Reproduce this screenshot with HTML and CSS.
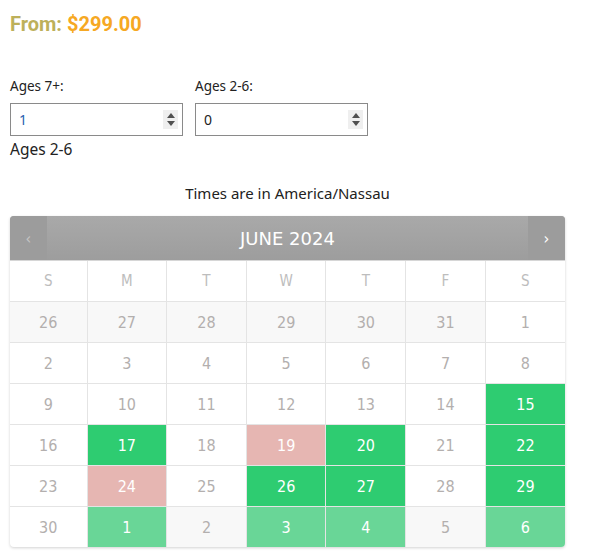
FILE: index.html
```html
<!DOCTYPE html>
<html lang="en">
  <head>
    <meta charset="UTF-8">
    <title>Booking</title>
    <link rel="stylesheet" href="styles.css">
  </head>
  <body>
    <div id="booking">
      <h2 class="price"><span class="price_from">From:</span> <span class="price_value">$299.00</span></h2>

      <div class="qty_row">
        <div class="qty">
          <label class="qty_label">Ages 7+:</label>
          <div class="qty_box">
            <input type="text" class="qty_input qty_input_blue" value="1">
            <span class="spin"><i class="spin_up"></i><i class="spin_down"></i></span>
          </div>
        </div>
        <div class="qty">
          <label class="qty_label">Ages 2-6:</label>
          <div class="qty_box">
            <input type="text" class="qty_input" value="0">
            <span class="spin"><i class="spin_up"></i><i class="spin_down"></i></span>
          </div>
        </div>
      </div>
      <div class="qty_note">Ages 2-6</div>

      <div class="tz">Times are in America/Nassau</div>

      <div class="cal">
        <div class="cal_head">
          <div class="cal_nav cal_prev">&lsaquo;</div>
          <div class="cal_title">JUNE 2024</div>
          <div class="cal_nav cal_next">&rsaquo;</div>
        </div>
        <table class="cal_grid">
          <colgroup>
            <col class="col_first"><col><col><col><col><col><col>
          </colgroup>
          <tr class="cal_days">
            <th>S</th><th>M</th><th>T</th><th>W</th><th>T</th><th>F</th><th>S</th>
          </tr>
          <tr>
            <td class="old">26</td><td class="old">27</td><td class="old">28</td><td class="old">29</td><td class="old">30</td><td class="old">31</td><td>1</td>
          </tr>
          <tr>
            <td>2</td><td>3</td><td>4</td><td>5</td><td>6</td><td>7</td><td>8</td>
          </tr>
          <tr>
            <td>9</td><td>10</td><td>11</td><td>12</td><td>13</td><td>14</td><td class="open">15</td>
          </tr>
          <tr>
            <td>16</td><td class="open">17</td><td>18</td><td class="full">19</td><td class="open">20</td><td>21</td><td class="open">22</td>
          </tr>
          <tr>
            <td>23</td><td class="full">24</td><td>25</td><td class="open">26</td><td class="open">27</td><td>28</td><td class="open">29</td>
          </tr>
          <tr>
            <td>30</td><td class="open_next">1</td><td class="old">2</td><td class="open_next">3</td><td class="open_next">4</td><td class="old">5</td><td class="open_next">6</td>
          </tr>
        </table>
      </div>
    </div>
  </body>
</html>
```

FILE: styles.css
```css
body {
  margin: 0;
  padding: 10px;
  background: #fff;
  font-family: "Noto Sans", sans-serif;
  color: #222;
}
#booking {
  width: 555px;
}
.price {
  margin: 2px 0 0 0;
  font-family: Roboto, sans-serif;
  font-size: 20px;
  font-weight: 700;
  line-height: 24px;
}
.price_from {
  color: #bdb05a;
}
.price_value {
  color: #f6a823;
}

.qty_row {
  display: flex;
  gap: 12px;
  margin-top: 41px;
}
.qty_label {
  display: block;
  font-size: 13.5px;
  line-height: 19px;
  margin-bottom: 7px;
}
.qty_box {
  width: 171px;
  height: 31px;
  border: 1px solid #8a8a8a;
  display: flex;
  align-items: center;
}
.qty_input {
  flex: 1;
  min-width: 0;
  border: none;
  outline: none;
  padding: 0 0 0 8px;
  font-family: "Noto Sans", sans-serif;
  font-size: 14px;
  color: #222;
  background: transparent;
}
.qty_input_blue {
  color: #2a5db0;
}
.spin {
  width: 15px;
  height: 19px;
  margin-right: 4px;
  background: #efefef;
  display: flex;
  flex-direction: column;
  align-items: center;
  justify-content: center;
  gap: 3px;
}
.spin_up {
  width: 0;
  height: 0;
  border-left: 4px solid transparent;
  border-right: 4px solid transparent;
  border-bottom: 5px solid #505050;
}
.spin_down {
  width: 0;
  height: 0;
  border-left: 4px solid transparent;
  border-right: 4px solid transparent;
  border-top: 5px solid #505050;
}
.qty_note {
  font-size: 15.5px;
  line-height: 20px;
  margin-top: 3px;
}

.tz {
  text-align: center;
  font-size: 15px;
  line-height: 20px;
  margin-top: 24px;
  color: #222;
}

.cal {
  margin-top: 13px;
  border-radius: 4px;
  box-shadow: 0 1px 3px rgba(0, 0, 0, 0.18);
  overflow: hidden;
  font-family: "DejaVu Sans Condensed", "DejaVu Sans", sans-serif;
}
.cal_head {
  height: 44px;
  display: flex;
  background: linear-gradient(#a9a9a9, #9d9d9d);
  border-bottom: 1px solid #d6d6d6;
  color: #fff;
}
.cal_nav {
  width: 37px;
  display: flex;
  align-items: center;
  justify-content: center;
  background: #9c9c9c;
  font-size: 16px;
}
.cal_prev {
  color: #c4c4c4;
}
.cal_title {
  flex: 1;
  display: flex;
  align-items: center;
  justify-content: center;
  font-family: "DejaVu Sans", sans-serif;
  font-size: 18px;
}
.cal_grid {
  width: 100%;
  border-collapse: collapse;
  table-layout: fixed;
}
.col_first {
  width: 77px;
}
.cal_grid th,
.cal_grid td {
  height: 40px;
  padding: 0;
  text-align: center;
  border: 1px solid #e4e4e4;
  font-size: 16px;
  font-weight: 400;
  color: #b3afae;
}
.cal_grid tr > :first-child {
  border-left: none;
}
.cal_grid tr > :last-child {
  border-right: none;
}
.cal_grid tr:last-child td {
  border-bottom: none;
}
.cal_days th {
  border-top: none;
  font-size: 15px;
  color: #bdbdbd;
}
.cal_grid td.old {
  background: #f8f8f8;
}
.cal_grid td.open {
  background: #2ecc71;
  color: #fff;
}
.cal_grid td.open_next {
  background: #69d697;
  color: #fff;
}
.cal_grid td.full {
  background: #e6b6b2;
  color: #fff;
}
```
